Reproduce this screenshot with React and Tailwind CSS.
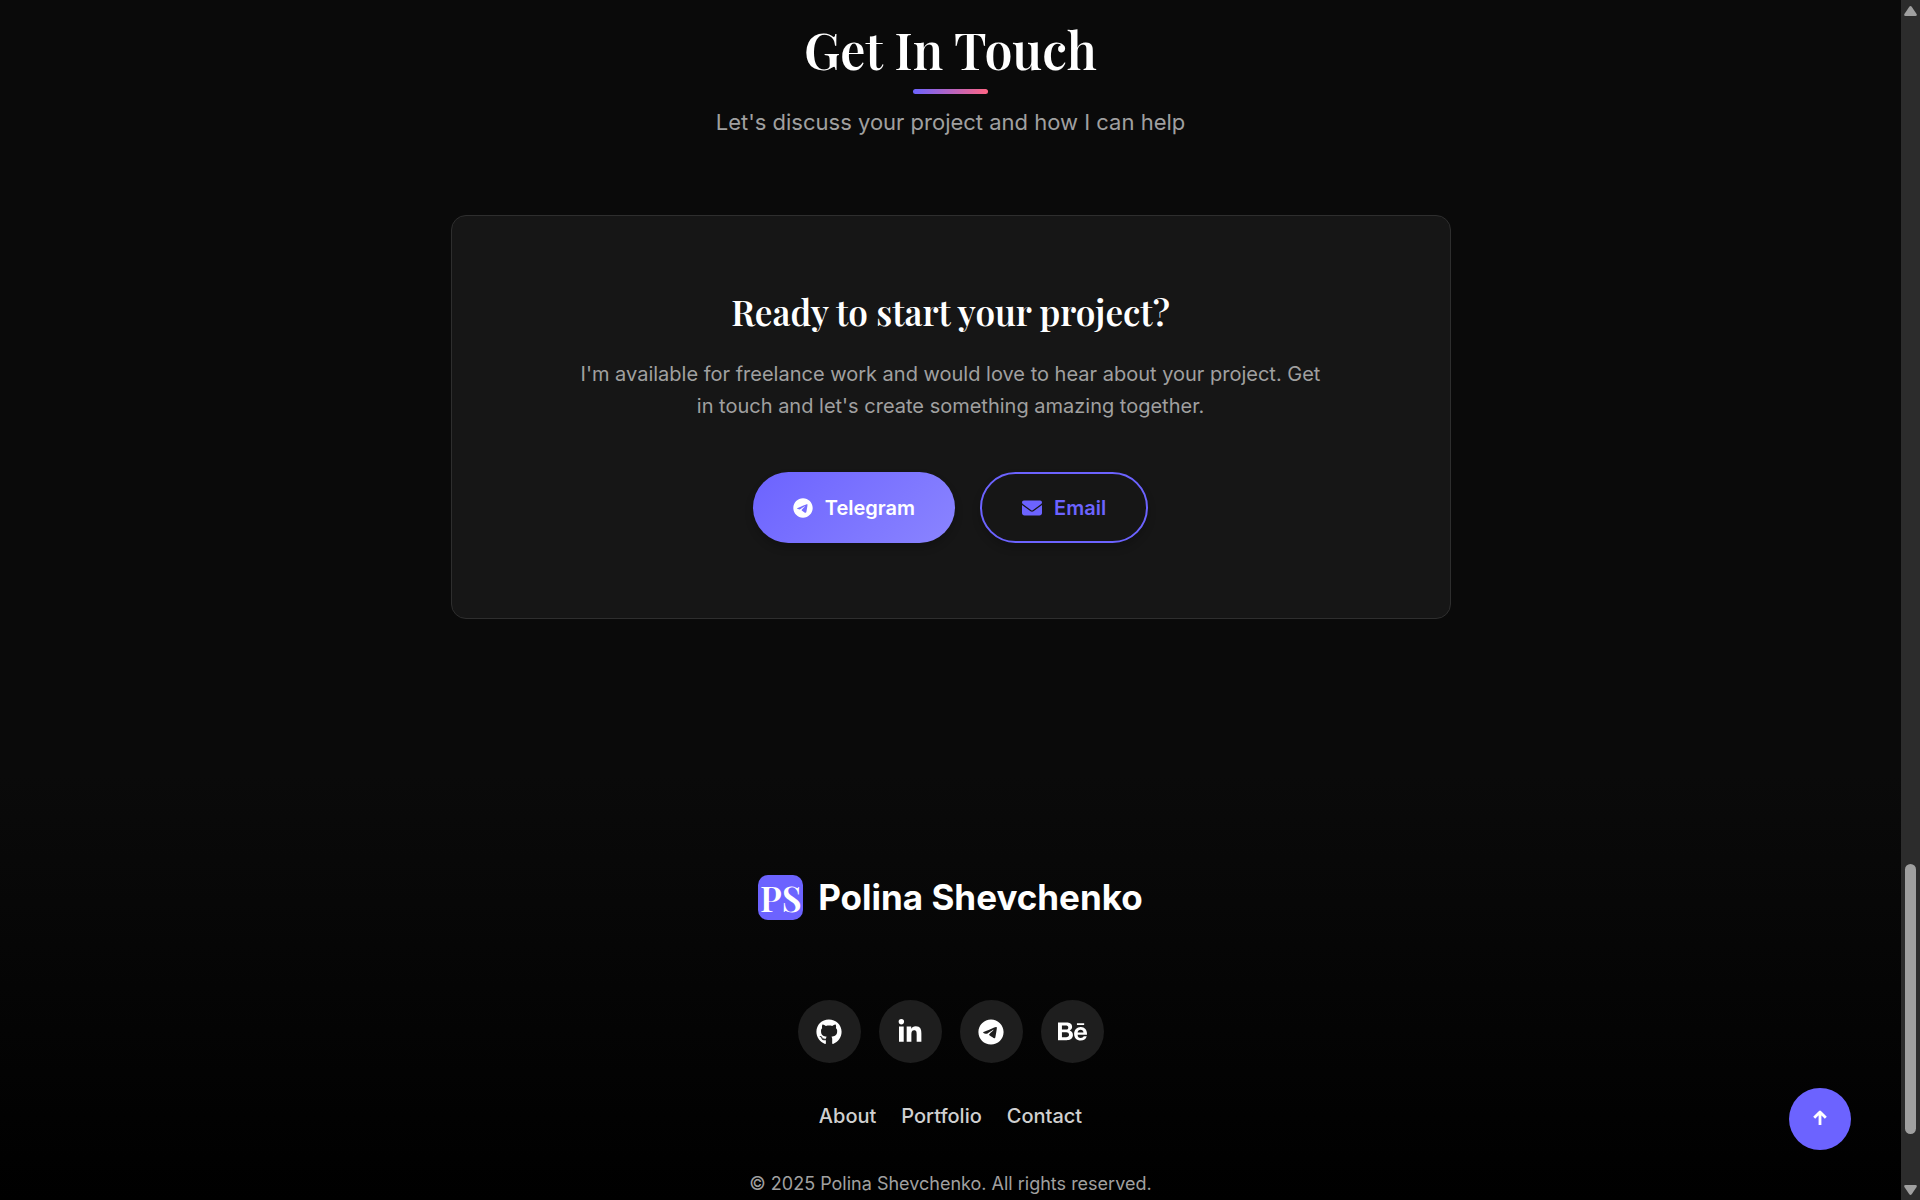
import { FaGithub, FaLinkedinIn, FaTelegram, FaBehance, FaEnvelope } from "react-icons/fa6";

const socials = [
  { name: "GitHub", href: "#github", icon: FaGithub, size: "size-[26px]" },
  { name: "LinkedIn", href: "#linkedin", icon: FaLinkedinIn, size: "size-[26px]" },
  { name: "Telegram", href: "#telegram", icon: FaTelegram, size: "size-[26px]" },
  { name: "Behance", href: "#behance", icon: FaBehance, size: "size-[29px]" },
];

const links = ["About", "Portfolio", "Contact"];

function Contact() {
  return (
    <section id="contact" className="px-8 pt-4 pb-[156px] text-center">
      <h2 className="font-['Playfair_Display','Liberation_Serif',serif] text-[50px] leading-[68px] font-semibold">
        Get In Touch
      </h2>
      <div className="mx-auto mt-[5px] h-[5px] w-[75px] rounded-[3px] bg-linear-to-r/srgb from-[#6c63ff] to-[#ff6584]" />
      <p className="mt-3 text-[22px] leading-8 text-[#a0a0a0]">
        Let's discuss your project and how I can help
      </p>

      <div className="mx-auto mt-[77px] max-w-[1000px] rounded-[15px] border border-[#2e2e2e] bg-[#161616] px-8 py-[75px]">
        <h3 className="font-['Playfair_Display','Liberation_Serif',serif] text-[35px] leading-[42px] font-semibold">
          Ready to start your project?
        </h3>
        <p className="mx-auto mt-[25px] max-w-[750px] text-[20px] leading-8 text-[#a0a0a0]">
          I'm available for freelance work and would love to hear about your project. Get in touch and let's create something amazing together.
        </p>
        <div className="mt-[50px] flex justify-center gap-[25px]">
          <a
            href="#telegram"
            className="flex h-[71px] items-center gap-3 rounded-full bg-linear-135/srgb from-[#6c63ff] to-[#8a84ff] px-10 text-[20px] font-semibold shadow-[0_5px_8px_rgba(0,0,0,0.2)]"
          >
            <FaTelegram size={20} />
            Telegram
          </a>
          <a
            href="#email"
            className="flex h-[71px] items-center gap-3 rounded-full border-2 border-[#6c63ff] px-10 text-[20px] font-semibold text-[#6c63ff] shadow-[0_5px_8px_rgba(0,0,0,0.2)]"
          >
            <FaEnvelope size={20} />
            Email
          </a>
        </div>
      </div>
    </section>
  );
}

function Footer() {
  return (
    <footer className="flex flex-1 flex-col items-center bg-linear-to-b/srgb from-[#0a0a0a] to-black px-8 pt-[100px]">
      <div className="flex items-center gap-[15px]">
        <span className="flex size-[45px] items-center justify-center rounded-[10px] bg-[#6c63ff] font-['Playfair_Display','Liberation_Serif',serif] text-[35px] leading-[42px] font-semibold">
          PS
        </span>
        <span className="text-[35px] leading-[45px] font-bold">Polina Shevchenko</span>
      </div>

      <div className="mt-20 flex gap-[18px]">
        {socials.map(({ name, href, icon: Icon, size }) => (
          <a
            key={name}
            href={href}
            aria-label={name}
            className="flex size-[63px] items-center justify-center rounded-full bg-[#1e1e1e]"
          >
            <Icon className={size} />
          </a>
        ))}
      </div>

      <nav className="mt-[37px] flex gap-[25px] text-[20px] leading-8 font-medium text-[#d0d0d0]">
        {links.map((link) => (
          <a key={link} href={`#${link.toLowerCase()}`}>
            {link}
          </a>
        ))}
      </nav>

      <p className="mt-[38px] text-[18px] leading-7 text-[#a0a0a0]">
        © 2025 Polina Shevchenko. All rights reserved.
      </p>
    </footer>
  );
}

function Scrollbar() {
  return (
    <div className="sticky top-0 flex h-screen w-[19px] shrink-0 flex-col items-center bg-[#2c2c2c] pt-[6px] pb-[5px]">
      <svg width="13" height="10" viewBox="0 0 13 10" fill="#9f9f9f">
        <path d="M5.3.7Q6.5-.7 7.7.7L12.6 8Q13.3 10 11.5 10H1.5Q-.3 10 .4 8Z" />
      </svg>
      <div className="mt-auto mb-[51px] h-[270px] w-[11px] rounded-full bg-[#9f9f9f]" />
      <svg width="13" height="10" viewBox="0 0 13 10" fill="#9f9f9f">
        <path d="M5.3 9.3Q6.5 10.7 7.7 9.3L12.6 2Q13.3 0 11.5 0H1.5Q-.3 0 .4 2Z" />
      </svg>
    </div>
  );
}

export default function App() {
  return (
    <div className="flex bg-[#0a0a0a] font-['Inter',sans-serif] text-white">
      <main className="flex min-h-screen flex-1 flex-col">
        <Contact />
        <Footer />
      </main>
      <Scrollbar />

      <button
        type="button"
        aria-label="Back to top"
        className="fixed right-[69px] bottom-[50px] flex size-[62px] items-center justify-center rounded-full bg-[#6c63ff]"
      >
        <svg width="14" height="18" viewBox="0 0 14 18" fill="none" stroke="currentColor" strokeWidth="2.8">
          <path d="M7 15V2M1.2 7.8 7 2l5.8 5.8" strokeLinejoin="round" />
        </svg>
      </button>
    </div>
  );
}
